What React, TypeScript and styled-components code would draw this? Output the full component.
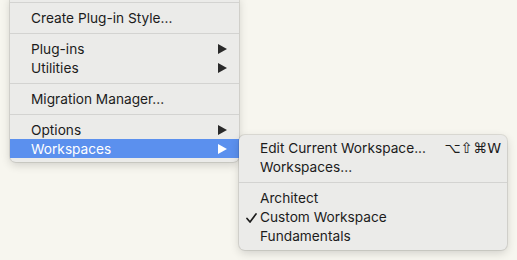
import styled, { createGlobalStyle } from "styled-components";

const GlobalStyle = createGlobalStyle`
  html, body {
    margin: 0;
    padding: 0;
    background: #f7f6ef;
    width: 517px;
    height: 260px;
    overflow: hidden;
  }
  body {
    font-family: Inter, "Noto Sans", "DejaVu Sans", sans-serif;
    -webkit-font-smoothing: antialiased;
  }
`;

const Stage = styled.div`
  padding-left: 10px;
  margin-top: -4px;
`;

const Menu = styled.div<{ $width: number; $cut?: boolean }>`
  position: relative;
  width: ${(p) => p.$width}px;
  background: #ebebe9;
  border-radius: ${(p) => (p.$cut ? "0 0 6px 6px" : "6px")};
  box-shadow: 0 0 0 1px rgba(0, 0, 0, 0.09), 0 3px 10px rgba(0, 0, 0, 0.16);
  padding: ${(p) => (p.$cut ? "0 0 4px" : "4px 0 4.5px")};
  box-sizing: border-box;
`;

const Item = styled.div<{ $active?: boolean }>`
  position: relative;
  height: 19px;
  display: flex;
  align-items: center;
  padding: 0 12px 0 21px;
  font-size: 13.7px;
  color: ${(p) => (p.$active ? "#ffffff" : "#1c1c1c")};
  background: ${(p) => (p.$active ? "#5b90ee" : "transparent")};
  white-space: nowrap;
`;

const SubItem = styled(Item)`
  padding: 0 6px 0 21px;
`;

const Label = styled.span`
  flex: 1;
`;

const Check = styled.svg`
  position: absolute;
  left: 7px;
  top: 5px;
`;

const Shortcut = styled.span`
  display: flex;
  align-items: center;
  font-family: "DejaVu Sans", Inter, sans-serif;
  color: #1c1c1c;
`;

const Key = styled.span<{ $big?: boolean }>`
  font-size: ${(p) => (p.$big ? "15px" : "14px")};
  line-height: 19px;
`;

const Separator = styled.div`
  height: 12px;
  display: flex;
  align-items: center;
  &::after {
    content: "";
    flex: 1;
    height: 1px;
    background: #d3d3d1;
  }
`;

const SubMenuSlot = styled.div`
  position: absolute;
  left: 229px;
  top: -4.5px;
  z-index: 2;
`;

function Arrow({ color }: { color: string }) {
  return (
    <svg width="9" height="10" viewBox="0 0 9 10">
      <polygon points="0,0 9,5 0,10" fill={color} />
    </svg>
  );
}

export default function App() {
  return (
    <>
      <GlobalStyle />
      <Stage>
        <Menu $width={229} $cut>
          <Separator />
          <Item>
            <Label>Create Plug-in Style...</Label>
          </Item>
          <Separator />
          <Item>
            <Label>Plug-ins</Label>
            <Arrow color="#2a2a2a" />
          </Item>
          <Item>
            <Label>Utilities</Label>
            <Arrow color="#2a2a2a" />
          </Item>
          <Separator />
          <Item>
            <Label>Migration Manager...</Label>
          </Item>
          <Separator />
          <Item>
            <Label>Options</Label>
            <Arrow color="#2a2a2a" />
          </Item>
          <Item $active>
            <Label>Workspaces</Label>
            <Arrow color="#ffffff" />
            <SubMenuSlot>
              <Menu $width={268}>
                <SubItem>
                  <Label>Edit Current Workspace...</Label>
                  <Shortcut>
                    <Key>⌥</Key>
                    <Key $big>⇧</Key>
                    <Key>⌘</Key>
                    <Key>W</Key>
                  </Shortcut>
                </SubItem>
                <SubItem>
                  <Label>Workspaces...</Label>
                </SubItem>
                <Separator />
                <SubItem>
                  <Label>Architect</Label>
                </SubItem>
                <SubItem>
                  <Check width="11" height="10" viewBox="0 0 11 10">
                    <polyline
                      points="1,5.5 4,9 10,1"
                      fill="none"
                      stroke="#1c1c1c"
                      strokeWidth="1.7"
                      strokeLinecap="round"
                      strokeLinejoin="round"
                    />
                  </Check>
                  <Label>Custom Workspace</Label>
                </SubItem>
                <SubItem>
                  <Label>Fundamentals</Label>
                </SubItem>
              </Menu>
            </SubMenuSlot>
          </Item>
        </Menu>
      </Stage>
    </>
  );
}
